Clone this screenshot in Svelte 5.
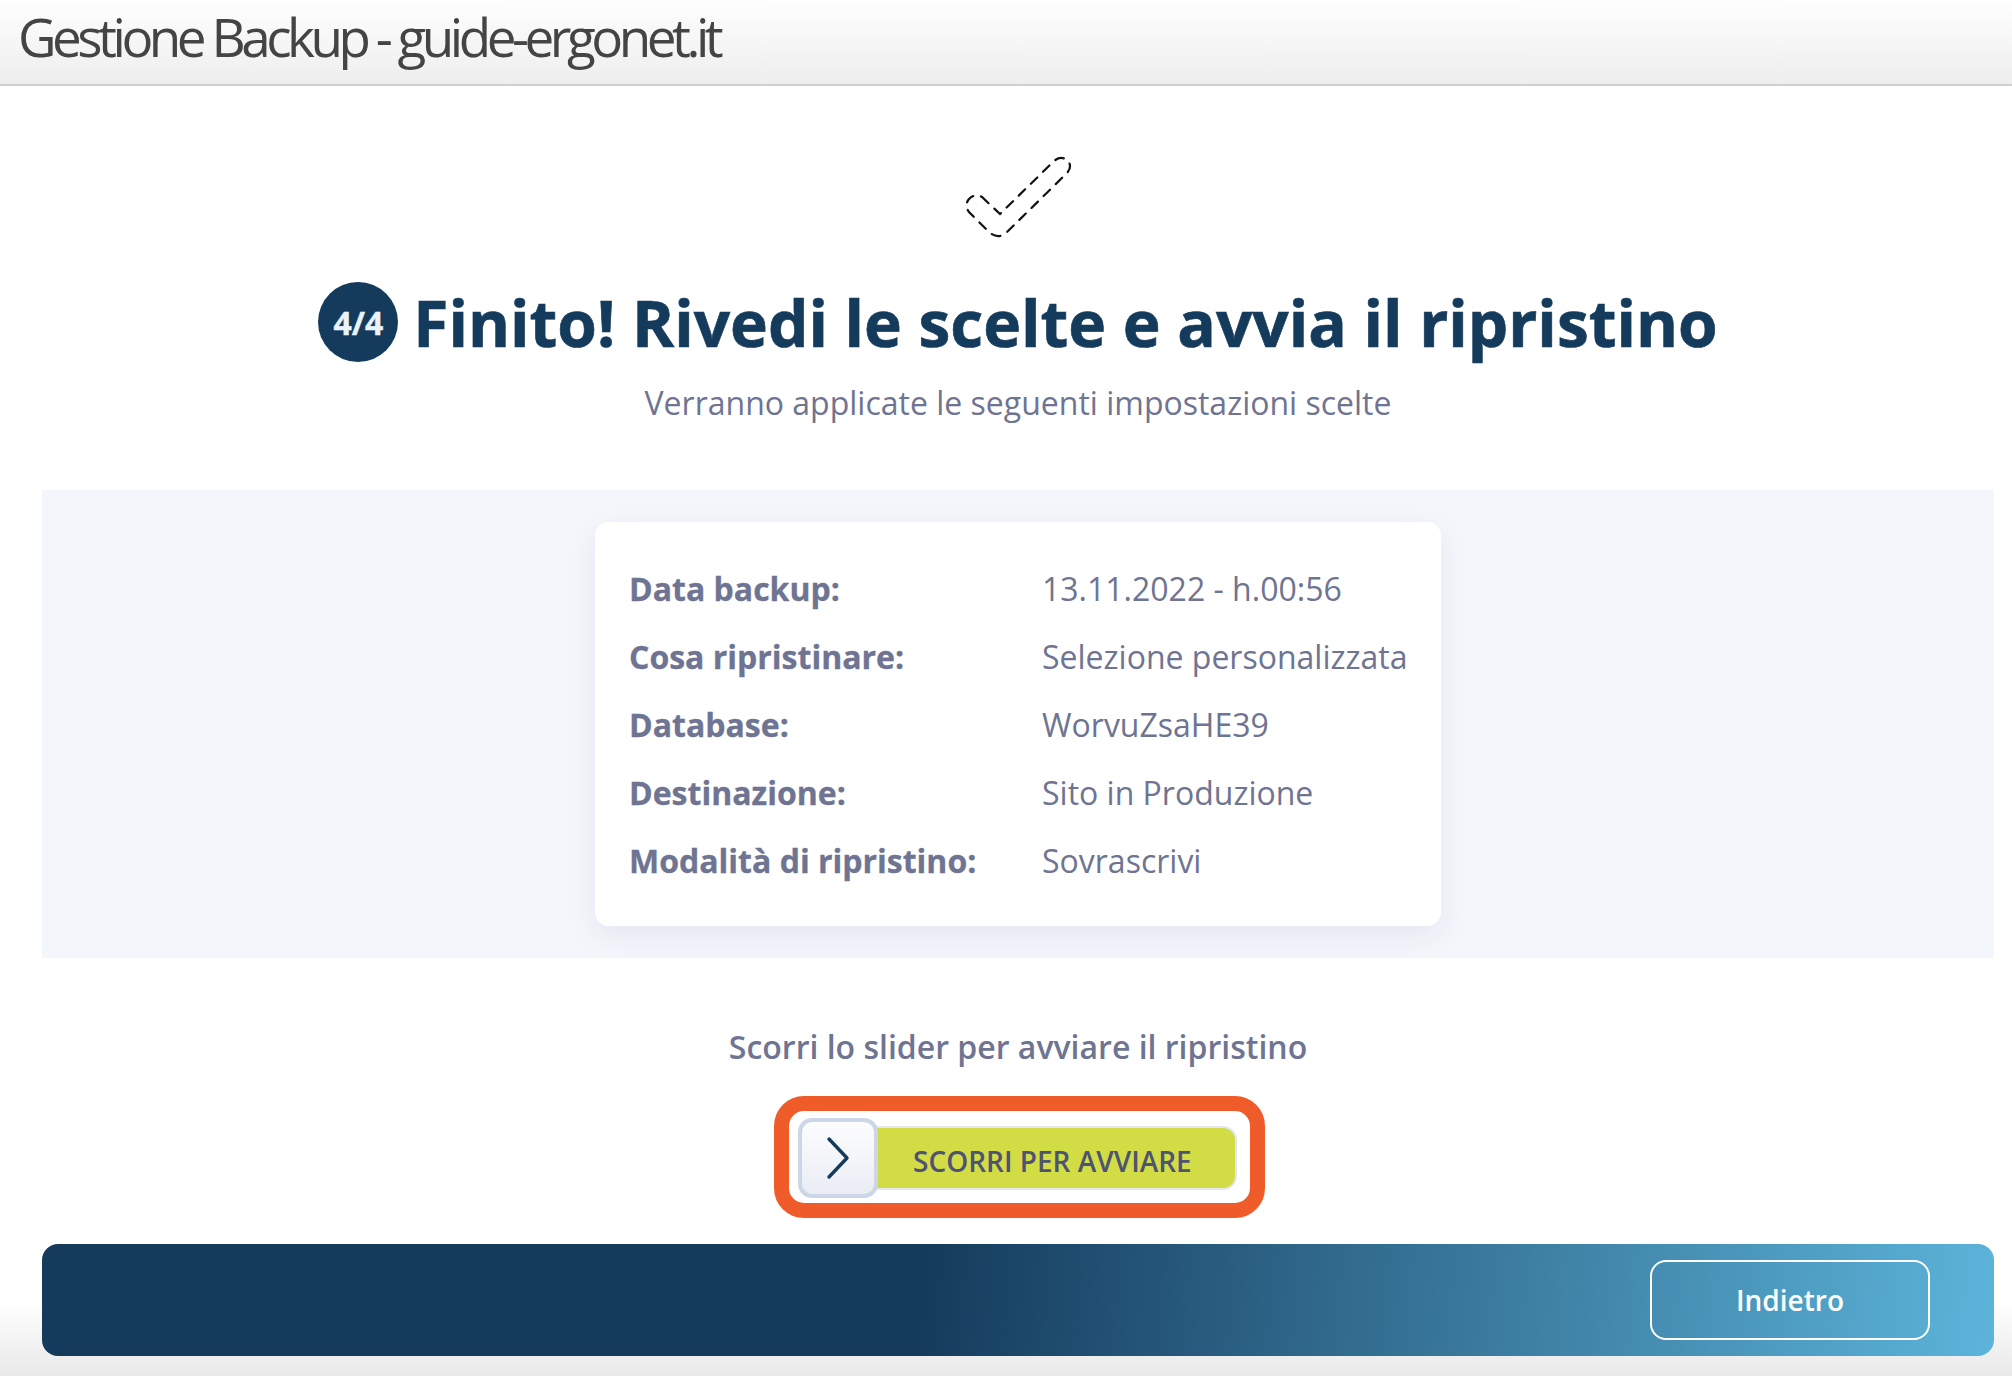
<script>
  const rows = [
    ['Data backup:', '13.11.2022 - h.00:56'],
    ['Cosa ripristinare:', 'Selezione personalizzata'],
    ['Database:', 'WorvuZsaHE39'],
    ['Destinazione:', 'Sito in Produzione'],
    ['Modalità di ripristino:', 'Sovrascrivi']
  ];
</script>

<div class="page">
  <header class="top"><h1>Gestione Backup - guide-ergonet.it</h1></header>
  <main class="main">
    <svg class="check" width="116" height="94" viewBox="0 0 116 94" aria-hidden="true">
      <path d="M22 47 L40 64 L93 12 Q100 5 107 10 Q113 16 107 23 L46 83 Q37 90 28 81 L9 62 Q4 55 9 49 Q15 43 22 47 Z" fill="none" stroke="#111" stroke-width="2.2" stroke-dasharray="9 8" stroke-linecap="round"/>
    </svg>
    <div class="title-row">
      <span class="badge">4/4</span>
      <h2>Finito! Rivedi le scelte e avvia il ripristino</h2>
    </div>
    <p class="sub">Verranno applicate le seguenti impostazioni scelte</p>
    <section class="panel">
      <div class="card">
        {#each rows as [k, v]}
          <div class="row"><span class="key">{k}</span><span class="val">{v}</span></div>
        {/each}
      </div>
    </section>
    <p class="hint">Scorri lo slider per avviare il ripristino</p>
    <div class="outline">
      <div class="slider">
        <div class="knob">
          <svg width="24" height="44" viewBox="0 0 24 44" aria-hidden="true"><path d="M3 3 L21 22 L3 41" fill="none" stroke="#153b5c" stroke-width="3.4" stroke-linecap="round" stroke-linejoin="round"/></svg>
        </div>
        <div class="track">SCORRI PER AVVIARE</div>
      </div>
    </div>
    <footer class="bar"><button class="back">Indietro</button></footer>
  </main>
</div>

<style>
  :global(body) { margin: 0; font-family: "Open Sans", sans-serif; }
  .page {
    width: 2012px; height: 1376px; overflow: hidden;
    display: flex; flex-direction: column;
    background: linear-gradient(#fff 1300px, #e9e9e9 1376px);
  }
  .top {
    height: 84px; flex: none; box-sizing: content-box;
    border-bottom: 2px solid #cfcfcf;
    background: linear-gradient(#fefefe, #eeeeee);
    padding-left: 18px; display: flex; align-items: flex-start;
  }
  h1 {
    margin: 0; font-size: 53px; font-weight: 400; color: #444;
    letter-spacing: -4.48px; line-height: 73px; white-space: nowrap;
  }
  .main {
    flex: 1; display: flex; flex-direction: column; align-items: center;
    padding: 0 18px 0 42px; min-height: 0;
  }
  .check { margin-top: 64px; flex: none; display: block; }
  .title-row { display: flex; align-items: center; gap: 15px; margin-top: 37px; height: 82px; }
  .badge {
    width: 80px; height: 80px; border-radius: 50%; background: #153b5c; color: #eaf3fb;
    display: flex; align-items: center; justify-content: center;
    font-size: 32px; font-weight: 700; -webkit-text-stroke: 0.4px #eaf3fb;
  }
  h2 {
    margin: 0; padding-top: 2px; font-size: 64px; font-weight: 700; color: #153b5c;
    line-height: 82px; white-space: nowrap; -webkit-text-stroke: 0.7px #153b5c;
  }
  .sub { margin: 18px 0 0; padding-bottom: 1px; font-size: 32px; line-height: 44px; color: #6e7491; }
  .panel {
    align-self: stretch; background: #f3f6fb; margin-top: 64px; height: 468px;
    display: flex; justify-content: center; align-items: flex-start;
    padding-top: 32px; box-sizing: border-box;
  }
  .card {
    width: 846px; height: 404px; box-sizing: border-box; background: #fff; border-radius: 14px;
    box-shadow: 0 10px 30px rgba(40, 60, 90, 0.07);
    padding: 32px 0 0 34px; display: flex; flex-direction: column;
  }
  .row { display: flex; height: 68px; align-items: center; font-size: 32px; color: #6e7491; white-space: nowrap; }
  .key { width: 413px; font-weight: 700; flex: none; -webkit-text-stroke: 0.3px #6e7491; }
  .hint { margin: 67px 0 0; font-size: 32px; line-height: 44px; font-weight: 600; color: #6e7491; }
  .outline {
    margin: 27px 0 0 3px; width: 491px; height: 122px; box-sizing: border-box; flex: none;
    border: 15px solid #ef5c2a; border-radius: 30px; background: #fff;
    display: flex; align-items: center; padding-left: 9px; padding-top: 2px;
  }
  .slider { display: flex; align-items: center; position: relative; }
  .knob {
    width: 80px; height: 80px; box-sizing: border-box; border: 4px solid #cdd6e6; border-radius: 14px;
    background: linear-gradient(#fdfdfe, #e9edf4);
    display: flex; align-items: center; justify-content: center;
    position: relative; z-index: 1; flex: none;
  }
  .track {
    width: 373px; height: 64px; margin-left: -14px; box-sizing: border-box;
    background: #d2dc45; border: 2px solid #e4e7f1; border-left: 0; border-radius: 0 14px 14px 0;
    display: flex; align-items: center; padding: 5px 0 0 49px;
    font-size: 28px; font-weight: 600; color: #4e5273; white-space: nowrap;
  }
  .bar {
    align-self: stretch; height: 112px; margin-top: 26px; flex: none; box-sizing: border-box;
    border-radius: 16px;
    background: linear-gradient(95deg, #153b5c 45%, #5cb4da 100%);
    display: flex; align-items: center; justify-content: flex-end; padding-right: 64px;
  }
  .back {
    width: 280px; height: 80px; background: transparent; border: 2px solid #fff; border-radius: 16px;
    color: #fff; font-family: "Open Sans", sans-serif; font-size: 28px; font-weight: 600;
  }
</style>
